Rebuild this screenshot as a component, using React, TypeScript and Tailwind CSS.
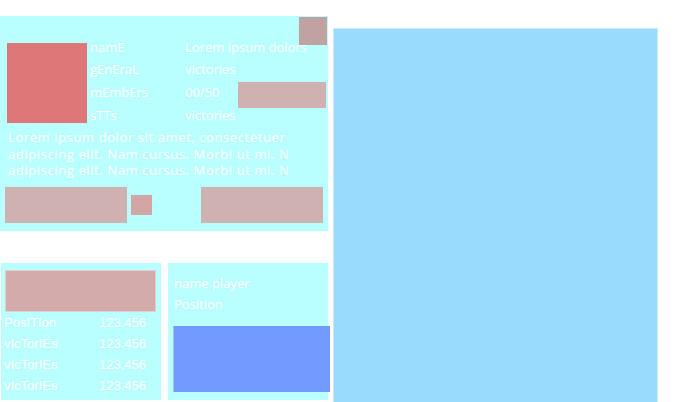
import React from 'react';

const sq = { fontFamily: '"Open Sans", "DejaVu Sans", sans-serif' };
const ar = { fontFamily: '"Liberation Sans", Arial, sans-serif' };

const InfoRow = ({ label, value, children, tall }: any) => (
  <div className={tall ? 'flex h-[24px] items-start' : 'flex h-[22px] items-center'}>
    <span className={tall ? 'w-[95px] leading-[22px]' : 'w-[95px]'}>{label}</span>
    <span className={tall ? 'leading-[22px]' : ''}>{value}</span>
    {children}
  </div>
);

const StatRow = ({ label }: { label: string }) => (
  <div className="flex h-[21px] items-center">
    <span className="w-[95px]">{label}</span>
    <span>123.456</span>
  </div>
);

export default function App() {
  return (
    <div className="flex h-[402px] w-[678px] gap-[5px] overflow-hidden bg-white text-white">
      <div className="flex w-[328px] flex-col">
        {/* team card */}
        <div className="relative mt-[16px] h-[215px] bg-[#baffff] px-[7px] pt-[21px] text-[13px]" style={sq}>
          <div className="absolute right-[1px] top-[1px] h-[28px] w-[28px] bg-[#c0a2a2]" />
          <div className="flex">
            <div className="mt-[6px] h-[80px] w-[80px] shrink-0 bg-[#de7878]" />
            <div className="ml-[3px] flex-1">
              <InfoRow label="namE" value="Lorem ipsum dolors" />
              <InfoRow label="gEnEraL" value="victories" />
              <InfoRow label="mEmbErs" value="00/50" tall>
                <div className="ml-auto mr-[-5px] mt-[1px] h-[26px] w-[88px] bg-[#d0b1b1]" />
              </InfoRow>
              <InfoRow label="sTTs" value="victories" />
            </div>
          </div>
          <p className="ml-[1px] mt-[2px] leading-[16.5px] tracking-[0.6px]">
            <span className="block">Lorem ipsum dolor sit amet, consectetuer</span>
            <span className="block">adipiscing elit. Nam cursus. Morbi ut mi. N</span>
            <span className="block">adipiscing elit. Nam cursus. Morbi ut mi. N</span>
          </p>
          <div className="-mx-[2px] mt-[8px] flex items-center">
            <div className="h-[36px] w-[122px] bg-[#d0b1b1]" />
            <div className="ml-[4px] h-[20px] w-[21px] bg-[#d4a5a5]" />
            <div className="ml-auto h-[36px] w-[122px] bg-[#d0b1b1]" />
          </div>
        </div>

        {/* bottom panels */}
        <div className="mt-[32px] flex gap-[7px] pl-[1px]">
          <div className="h-[137px] w-[160px] bg-[#baffff] pl-[3px] pt-[7px] text-[13px]" style={ar}>
            <div className="ml-[1px] h-[42px] w-[151px] border border-[#e0d0d0] bg-[#d3abab]" />
            <StatRow label="PosITIon" />
            <StatRow label="vIcTorIEs" />
            <StatRow label="vIcTorIEs" />
            <StatRow label="vIcTorIEs" />
          </div>
          <div className="h-[137px] w-[160px] bg-[#baffff] pt-[10px] text-[13px]" style={sq}>
            <div className="pl-[6px] leading-[21px]">
              <div>name player</div>
              <div>Position</div>
            </div>
            <div className="ml-[5px] mt-[11px] h-[66px] w-[157px] border-l border-[#a6bfff] bg-[#739bff]" />
          </div>
        </div>
      </div>

      {/* main area */}
      <div className="mt-[28px] h-[380px] w-[325px] border border-[#c8ecfd] bg-[#99dbfd]" />
    </div>
  );
}
